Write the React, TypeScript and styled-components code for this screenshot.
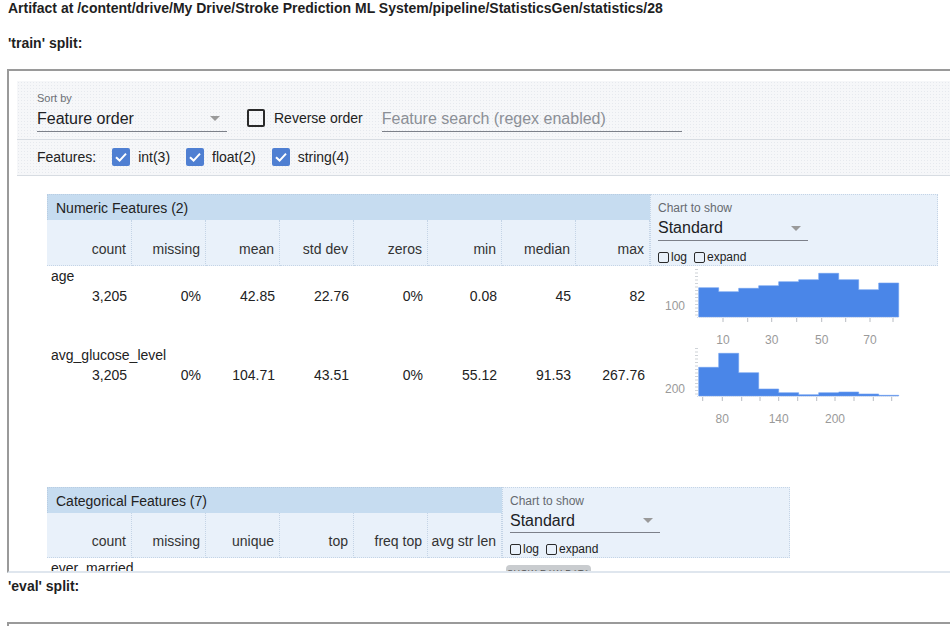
import React from "react";
import styled, { createGlobalStyle } from "styled-components";

const Global = createGlobalStyle`
  html, body { margin: 0; padding: 0; background: #fff; overflow: hidden; }
  body { font-family: "Liberation Sans", Arial, sans-serif; color: #222; }
  * { box-sizing: border-box; }
`;

const Page = styled.div`
  width: 950px;
  height: 626px;
  padding-left: 7px;
  overflow: hidden;
`;

const Heading = styled.div<{ $top: number }>`
  margin-top: ${(p) => p.$top}px;
  padding-left: 1px;
  font-size: 14px;
  font-weight: bold;
  line-height: 16px;
  height: 16px;
  color: #1f1f1f;
  white-space: nowrap;
`;

const Frame = styled.div<{ $top: number; $height: number }>`
  margin-top: ${(p) => p.$top}px;
  width: 1000px;
  height: ${(p) => p.$height}px;
  border-top: 2px solid #9a9a9a;
  border-left: 2px solid #9a9a9a;
  border-bottom: 2px solid #dfe6ee;
  overflow: hidden;
  padding: 10px 0 0 8px;
`;

const ControlPanel = styled.div`
  background-color: #f6f7f9;
  background-image: radial-gradient(#e6e9ee 0.6px, transparent 0.7px);
  background-size: 3px 3px;
  width: 960px;
`;

const ControlRow = styled.div<{ $height: number; $align: string }>`
  display: flex;
  align-items: ${(p) => p.$align};
  height: ${(p) => p.$height}px;
  padding: 0 0 0 20px;
  border-bottom: 1px solid #d7dce2;
`;

const TopRow = styled(ControlRow)`
  padding-bottom: 7px;
`;

const FeatureRow = styled(ControlRow)`
  padding-bottom: 2px;
`;

const Field = styled.div<{ $width: number }>`
  display: flex;
  flex-direction: column;
  width: ${(p) => p.$width}px;
`;

const FieldLabel = styled.div`
  font-size: 11px;
  line-height: 14px;
  color: #6b6f75;
`;

const SelectBox = styled.div`
  display: flex;
  align-items: center;
  justify-content: space-between;
  height: 27px;
  padding: 1px 7px 0 0;
  border-bottom: 1px solid #7c8089;
  font-size: 16px;
  color: #202124;
`;

const SearchBox = styled(SelectBox)<{ $width: number }>`
  width: ${(p) => p.$width}px;
  color: #8b8f96;
  margin-left: 19px;
`;

const Arrow = styled.span`
  width: 0;
  height: 0;
  border-left: 5px solid transparent;
  border-right: 5px solid transparent;
  border-top: 5px solid #9a9a9a;
`;

const CheckGroup = styled.label<{ $gap: number; $ml: number; $size: number; $h: number }>`
  display: flex;
  align-items: center;
  gap: ${(p) => p.$gap}px;
  margin-left: ${(p) => p.$ml}px;
  font-size: ${(p) => p.$size}px;
  color: #222;
  height: ${(p) => p.$h}px;
`;

const Box = styled.span<{ $checked?: boolean; $size: number }>`
  display: inline-flex;
  align-items: center;
  justify-content: center;
  width: ${(p) => p.$size}px;
  height: ${(p) => p.$size}px;
  border-radius: 2px;
  border: ${(p) => (p.$checked ? "none" : `${p.$size > 12 ? 2 : 1.5}px solid #2a2a2a`)};
  background: ${(p) => (p.$checked ? "#4f7fd2" : "transparent")};
  flex: none;
`;

const FeaturesLabel = styled.span`
  font-size: 14px;
  margin-right: 16px;
`;

const Content = styled.div`
  padding-left: 30px;
`;

const TableGrid = styled.div<{ $cols: number; $top: number; $colRow: number }>`
  display: grid;
  grid-template-columns: 85px repeat(${(p) => p.$cols}, 74px) 288px;
  grid-template-rows: 26px ${(p) => p.$colRow}px;
  margin-top: ${(p) => p.$top}px;
  width: fit-content;
`;

const Band = styled.div`
  grid-row: 1;
  grid-column: 1 / -2;
  background: #c6dcf0;
  border-top: 1px dotted #b9cde2;
  border-left: 1px dotted #b9cde2;
  display: flex;
  align-items: center;
  padding-left: 8px;
  font-size: 14px;
  color: #222;
`;

const ColHead = styled.div`
  grid-row: 2;
  background: #e9f1fa;
  border-right: 1px dotted #c4d4e6;
  border-bottom: 1px dotted #c4d4e6;
  display: flex;
  align-items: flex-end;
  justify-content: flex-end;
  padding: 0 5px 8px 0;
  font-size: 14px;
  line-height: 16px;
  color: #333;
  white-space: nowrap;
  &:first-of-type {
    border-left: 1px dotted #c4d4e6;
  }
`;

const ChartPanel = styled.div`
  grid-row: 1 / 3;
  grid-column: -2;
  background: #e9f1fa;
  border: 1px dotted #c4d4e6;
  padding: 6px 0 0 7px;
  display: flex;
  flex-direction: column;
`;

const PanelLabel = styled.div`
  font-size: 12px;
  line-height: 14px;
  color: #666a70;
`;

const PanelSelect = styled(SelectBox)`
  width: 150px;
  height: 26px;
`;

const Toggles = styled.div`
  display: flex;
  align-items: center;
  margin-top: 8px;
  height: 16px;
`;

const DataRow = styled.div<{ $cols: number }>`
  display: grid;
  grid-template-columns: 85px repeat(${(p) => p.$cols}, 74px) 288px;
  grid-template-rows: 20px 20px 1fr;
  height: 79px;
  width: fit-content;
`;

const RowName = styled.div`
  grid-row: 1;
  grid-column: 1 / -2;
  padding-left: 4px;
  font-size: 14px;
  line-height: 20px;
  color: #222;
`;

const Value = styled.div`
  grid-row: 2;
  text-align: right;
  padding-right: 5px;
  font-size: 14px;
  line-height: 20px;
  color: #222;
`;

const ChartCell = styled.div`
  grid-row: 1 / -1;
  grid-column: -2;
  padding-top: 1px;
`;

const RawButton = styled.div`
  margin: 6px 0 0 4px;
  width: 85px;
  height: 16px;
  border-radius: 4px;
  background: #c9cccf;
  font-size: 9px;
  color: #555;
  text-align: center;
  line-height: 16px;
  letter-spacing: 0.5px;
`;

const AxisText = styled.text`
  font-family: "Liberation Sans", Arial, sans-serif;
  font-size: 12px;
  fill: #9a9a9a;
`;

type Hist = {
  bars: number[];
  base: number;
  yLabel: string;
  yLabelY: number;
  ticks: number[];
  labels: [string, number][];
  labelY: number;
};

const Histogram: React.FC<Hist> = ({ bars, base, yLabel, yLabelY, ticks, labels, labelY }) => {
  const x0 = 48.7;
  const w = 20;
  let d = `M${x0} ${base}`;
  bars.forEach((t, i) => {
    d += ` L${x0 + i * w} ${t} L${x0 + (i + 1) * w} ${t}`;
  });
  d += ` L${x0 + bars.length * w} ${base} Z`;
  return (
    <svg width="288" height="79" viewBox="0 0 288 79">
      <line x1="46.5" y1="2" x2="46.5" y2={base} stroke="#cfd3d8" strokeWidth="3" strokeDasharray="1 2.5" />
      <path d={d} fill="#4a86e8" stroke="#6f9ff0" strokeWidth="0.6" />
      <line x1="47" y1={base + 0.5} x2="249" y2={base + 0.5} stroke="#d5dce6" strokeWidth="1" strokeDasharray="1 1" />
      {ticks.map((tx, i) => (
        <line key={i} x1={tx} y1={base + 1} x2={tx} y2={base + 5} stroke="#b8bcc2" strokeWidth="1" />
      ))}
      <AxisText x="35" y={yLabelY + 4} textAnchor="end">
        {yLabel}
      </AxisText>
      {labels.map(([l, x]) => (
        <AxisText key={l} x={x} y={labelY + 4} textAnchor="middle">
          {l}
        </AxisText>
      ))}
    </svg>
  );
};

const Check = () => (
  <svg width="18" height="18" viewBox="0 0 18 18">
    <path d="M4 9.2 L7.6 12.6 L14 5.6" fill="none" stroke="#fff" strokeWidth="2" />
  </svg>
);

const ChartControls: React.FC = () => (
  <ChartPanel>
    <PanelLabel>Chart to show</PanelLabel>
    <PanelSelect>
      Standard
      <Arrow />
    </PanelSelect>
    <Toggles>
      <CheckGroup $gap={2} $ml={0} $size={12} $h={16}>
        <Box $size={11} />
        log
      </CheckGroup>
      <CheckGroup $gap={2} $ml={7} $size={12} $h={16}>
        <Box $size={11} />
        expand
      </CheckGroup>
    </Toggles>
  </ChartPanel>
);

const numericCols = ["count", "missing", "mean", "std dev", "zeros", "min", "median", "max"];
const catCols = ["count", "missing", "unique", "top", "freq top", "avg str len"];

const numericRows: { name: string; values: string[]; hist: Hist }[] = [
  {
    name: "age",
    values: ["3,205", "0%", "42.85", "22.76", "0%", "0.08", "45", "82"],
    hist: {
      bars: [20.7, 24.7, 21.3, 18.7, 14.7, 12.7, 6.3, 12.7, 22.7, 16],
      base: 50,
      yLabel: "100",
      yLabelY: 39,
      ticks: [73, 97.7, 121.7, 146.7, 171.7, 195.7, 220, 243],
      labels: [["10", 73], ["30", 121.7], ["50", 171.7], ["70", 220]],
      labelY: 73,
    },
  },
  {
    name: "avg_glucose_level",
    values: ["3,205", "0%", "104.71", "43.51", "0%", "55.12", "91.53", "267.76"],
    hist: {
      bars: [21.3, 7.3, 26.7, 43, 46.7, 48.7, 46.7, 46, 48, 49.3],
      base: 50,
      yLabel: "200",
      yLabelY: 43,
      ticks: [52.7, 72.3, 91.7, 110, 128.7, 147.7, 166.7, 185, 204, 223.3, 241.7],
      labels: [["80", 72.3], ["140", 128.7], ["200", 185]],
      labelY: 73,
    },
  },
];

export default function App() {
  return (
    <Page>
      <Global />
      <Heading $top={0}>
        Artifact at /content/drive/My Drive/Stroke Prediction ML System/pipeline/StatisticsGen/statistics/28
      </Heading>
      <Heading $top={19}>'train' split:</Heading>
      <Frame $top={18} $height={504}>
        <ControlPanel>
          <TopRow $height={59} $align="flex-end">
            <Field $width={190}>
              <FieldLabel>Sort by</FieldLabel>
              <SelectBox>
                Feature order
                <Arrow />
              </SelectBox>
            </Field>
            <CheckGroup $gap={9} $ml={20} $size={14} $h={28}>
              <Box $size={18} />
              Reverse order
            </CheckGroup>
            <SearchBox $width={300}>Feature search (regex enabled)</SearchBox>
          </TopRow>
          <FeatureRow $height={36} $align="center">
            <FeaturesLabel>Features:</FeaturesLabel>
            <CheckGroup $gap={8} $ml={0} $size={14} $h={28}>
              <Box $checked $size={18}>
                <Check />
              </Box>
              int(3)
            </CheckGroup>
            <CheckGroup $gap={8} $ml={16} $size={14} $h={28}>
              <Box $checked $size={18}>
                <Check />
              </Box>
              float(2)
            </CheckGroup>
            <CheckGroup $gap={8} $ml={16} $size={14} $h={28}>
              <Box $checked $size={18}>
                <Check />
              </Box>
              string(4)
            </CheckGroup>
          </FeatureRow>
        </ControlPanel>

        <Content>
          <TableGrid $cols={7} $top={18} $colRow={46}>
            <Band>Numeric Features (2)</Band>
            {numericCols.map((c) => (
              <ColHead key={c}>{c}</ColHead>
            ))}
            <ChartControls />
          </TableGrid>
          {numericRows.map((r) => (
            <DataRow key={r.name} $cols={7}>
              <RowName>{r.name}</RowName>
              {r.values.map((v, i) => (
                <Value key={i}>{v}</Value>
              ))}
              <ChartCell>
                <Histogram {...r.hist} />
              </ChartCell>
            </DataRow>
          ))}

          <TableGrid $cols={5} $top={63} $colRow={45}>
            <Band>Categorical Features (7)</Band>
            {catCols.map((c) => (
              <ColHead key={c}>{c}</ColHead>
            ))}
            <ChartControls />
          </TableGrid>
          <DataRow $cols={5}>
            <RowName>ever_married</RowName>
            <ChartCell>
              <RawButton>SHOW RAW DATA</RawButton>
            </ChartCell>
          </DataRow>
        </Content>
      </Frame>
      <Heading $top={5}>'eval' split:</Heading>
      <Frame $top={28} $height={40}>
        <div />
      </Frame>
    </Page>
  );
}
